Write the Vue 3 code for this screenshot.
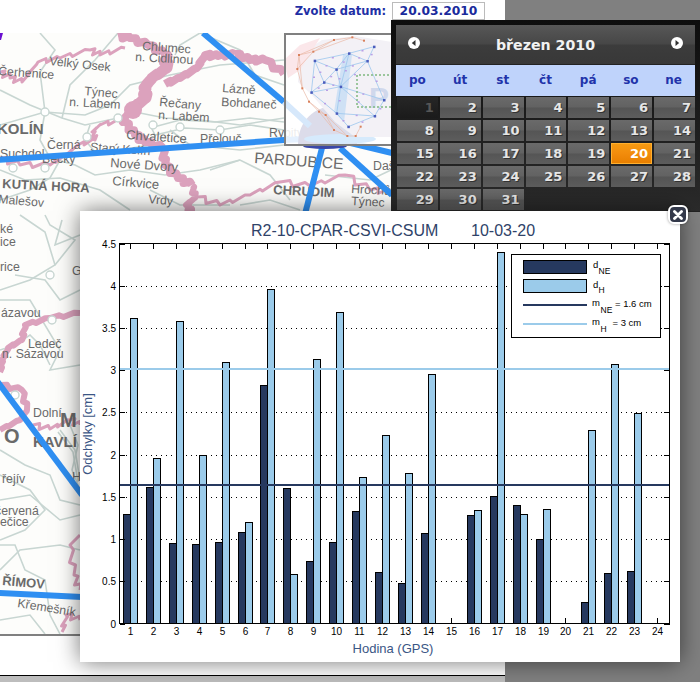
<template>
  <div class="page">
    <div class="date-row">
      <label class="date-label">Zvolte datum:</label>
      <span class="date-input">20.03.2010</span>
    </div>

    <svg class="map" viewBox="0 33 505 601" role="img" aria-label="Mapa">
      <rect x="0" y="33" width="505" height="601" fill="#fdfdfb" />
      <polygon points="0,33 3,33 1,40 0,40" fill="#6a10d0" />
      <polyline v-for="(r, i) in roads" :key="'r' + i" :points="r" class="road" />
      <polyline v-for="(b, i) in borders" :key="'b' + i" :points="jag(b.p, b.w)" class="border" :stroke-width="b.w" />
      <circle cx="133" cy="110" r="9" fill="#dca2bd" />
      <circle v-for="(c, i) in junctions" :key="'j' + i" :cx="c[0]" :cy="c[1]" r="4" class="junction" />
      <text
        v-for="(l, i) in labels"
        :key="'l' + i"
        :x="l.x"
        :y="l.y"
        :font-size="l.s || 12.3"
        :font-weight="l.b ? 700 : 400"
        :transform="`rotate(${l.r || 0} ${l.x} ${l.y})`"
        class="place"
      >{{ l.t }}</text>
      <polyline v-for="(b, i) in links" :key="'k' + i" :points="b" class="link" />

      <ellipse cx="325" cy="146" rx="22" ry="3" fill="#3a48a8" />
      <rect x="285" y="34" width="108" height="111" fill="#fff" opacity="0.88" />
      <path d="M298 145 C298 118 318 105 335 107 C350 110 357 128 357 145 Z" fill="#dcdcea" />
      <ellipse cx="340" cy="139" rx="36" ry="5" fill="#d6eafc" />
      <polyline points="284,102 310,126" stroke="#d6e8fb" stroke-width="6" fill="none" />
      <polygon points="300,55 322,40 355,36 392,42 392,137 355,137 335,122 312,95 298,82" fill="#f3f1f6" />
      <polygon points="343,55 352,55 344,122 334,112" fill="#cfe1f5" />
      <polygon points="284,60 300,45 320,38 300,70 288,78" fill="#fbe7ea" />
      <text x="369" y="108" class="inset-letter">P</text>
      <line v-for="(e, i) in redEdges" :key="'re' + i" :x1="e[0]" :y1="e[1]" :x2="e[2]" :y2="e[3]" class="red-edge" />
      <line v-for="(e, i) in blueEdges" :key="'be' + i" :x1="e[0]" :y1="e[1]" :x2="e[2]" :y2="e[3]" class="blue-edge" />
      <rect v-for="(n, i) in specks" :key="'s' + i" :x="n[0]" :y="n[1]" width="2" height="1.5" fill="#b9a0e6" />
      <path d="M393 75 H357 V107 H393" class="green-box" />
      <rect v-for="(n, i) in redNodes" :key="'rn' + i" :x="n[0] - 1" :y="n[1] - 1" width="2" height="2" fill="#d9805c" />
      <rect v-for="(n, i) in blueNodes" :key="'bn' + i" :x="n[0] - 1" :y="n[1] - 1" width="2.5" height="2.5" fill="#4a5cbc" />
      <rect x="285" y="34" width="108" height="111" class="inset-frame" />
    </svg>

    <div class="footer"></div>

    <div class="dim"></div>

    <div class="calendar">
      <div class="cal-head">
        <svg class="nav" viewBox="0 0 12 12"><circle cx="6" cy="6" r="6" fill="#fff" /><path d="M7.5 3 L3.8 6 L7.5 9 Z" fill="#333" /></svg>
        <span class="cal-title">březen 2010</span>
        <svg class="nav" viewBox="0 0 12 12"><circle cx="6" cy="6" r="6" fill="#fff" /><path d="M4.5 3 L8.2 6 L4.5 9 Z" fill="#333" /></svg>
      </div>
      <div class="cal-week">
        <span v-for="d in weekdays" :key="d">{{ d }}</span>
      </div>
      <div class="cal-days">
        <span
          v-for="n in 31"
          :key="n"
          class="day"
          :class="{ off: n === 1, active: n === 20 }"
        >{{ n }}</span>
      </div>
    </div>

    <div class="modal">
      <svg class="chart" viewBox="80 211 600 451" role="img" aria-label="Odchylky">
        <text x="251" y="236" class="chart-title">R2-10-CPAR-CSVI-CSUM</text>
        <text x="471" y="236" class="chart-title">10-03-20</text>

        <line
          v-for="v in gridValues"
          :key="'g' + v"
          :x1="axis.left + 1"
          :x2="axis.right - 1"
          :y1="y(v)"
          :y2="y(v)"
          class="grid"
        />

        <template v-for="(h, i) in hours" :key="'h' + i">
          <line :x1="px(i)" :x2="px(i)" :y1="axis.top" :y2="axis.top + 5" class="tick" />
          <line :x1="px(i)" :x2="px(i)" :y1="axis.bottom" :y2="axis.bottom - 6" class="tick" />
          <rect
            v-if="dNE[i]"
            :x="px(i) - 7"
            :y="y(dNE[i])"
            width="7"
            :height="axis.bottom - y(dNE[i])"
            class="bar-ne"
          />
          <rect
            v-if="dH[i]"
            :x="px(i)"
            :y="y(dH[i])"
            width="7"
            :height="axis.bottom - y(dH[i])"
            class="bar-h"
          />
          <text :x="px(i)" y="635" class="tick-label" text-anchor="middle">{{ h }}</text>
        </template>

        <template v-for="v in tickValues" :key="'t' + v">
          <line :x1="axis.left" :x2="axis.left + 5" :y1="y(v)" :y2="y(v)" class="tick" />
          <line :x1="axis.right" :x2="axis.right - 6" :y1="y(v)" :y2="y(v)" class="tick" />
          <text x="116" :y="y(v) + 3.5" class="tick-label" text-anchor="end">{{ v }}</text>
        </template>

        <line :x1="axis.left" :x2="axis.right" y1="485" y2="485" class="mean-ne" />
        <line :x1="axis.left" :x2="axis.right" y1="369" y2="369" class="mean-h" />
        <rect :x="axis.left" :y="axis.top" :width="axis.right - axis.left" :height="axis.bottom - axis.top" class="frame" />

        <rect x="511.5" y="254.5" width="149" height="83" class="legend" />
        <rect x="523.5" y="260.5" width="63" height="13" class="bar-ne" />
        <rect x="523.5" y="279.5" width="63" height="13" class="bar-h" />
        <line x1="523" x2="587" y1="305" y2="305" class="legend-ne" />
        <line x1="523" x2="587" y1="324" y2="324" class="legend-h" />
        <text x="593" y="268" class="legend-text">d</text>
        <text x="598.5" y="274" class="legend-sub">NE</text>
        <text x="593" y="288" class="legend-text">d</text>
        <text x="598.5" y="293" class="legend-sub">H</text>
        <text x="592" y="306" class="legend-text">m</text>
        <text x="600.5" y="313" class="legend-sub">NE</text>
        <text x="615" y="307" class="legend-text">= 1.6 cm</text>
        <text x="592" y="325" class="legend-text">m</text>
        <text x="600.5" y="332" class="legend-sub">H</text>
        <text x="612.5" y="326" class="legend-text">= 3 cm</text>

        <text transform="translate(92 434) rotate(-90)" class="axis-title" text-anchor="middle">Odchylky [cm]</text>
        <text x="393" y="653" class="axis-title" text-anchor="middle">Hodina (GPS)</text>
      </svg>
      <button class="close" aria-label="Zavřít">
        <svg viewBox="0 0 10 10" width="10" height="10"><path d="M1.5 1.5 L8.5 8.5 M8.5 1.5 L1.5 8.5" stroke="#fff" stroke-width="2.8" stroke-linecap="round" /></svg>
      </button>
    </div>
  </div>
</template>

<script setup>
const weekdays = ['po', 'út', 'st', 'čt', 'pá', 'so', 'ne']

const axis = { left: 119.5, right: 669.5, top: 243.5, bottom: 623.5 }
const hours = Array.from({ length: 24 }, (_, i) => i + 1)
const dNE = [1.3, 1.62, 0.95, 0.94, 0.96, 1.08, 2.82, 1.6, 0.74, 0.96, 1.33, 0.61, 0.48, 1.07, 0, 1.28, 1.51, 1.4, 1.0, 0, 0.26, 0.6, 0.62, 0]
const dH = [3.62, 1.96, 3.58, 2.0, 3.1, 1.2, 3.96, 0.59, 3.13, 3.69, 1.74, 2.23, 1.78, 2.96, 0, 1.35, 4.4, 1.3, 1.36, 0, 2.29, 3.07, 2.49, 0]
const tickValues = [4.5, 4, 3.5, 3, 2.5, 2, 1.5, 1, 0.5, 0]
const gridValues = [4, 3.5, 2.5, 2, 1.5, 1, 0.5]

const px = (i) => Math.round(axis.left + (i + 0.5) * 22.92) - 0.5
const y = (v) => Math.round(axis.bottom - v * 84.44) + 0.5

// district borders on the map are jagged, so each leg gets a few offset points
const jag = (points, w) => {
  const pts = points.split(' ').map((s) => s.split(',').map(Number))
  const out = []
  pts.forEach((p, i) => {
    out.push(p.join(','))
    const q = pts[i + 1]
    if (!q) return
    for (let k = 1; k < 4; k++) {
      const off = (k % 2 ? 1 : -1) * (w > 4 ? 1.5 : 2.5)
      out.push(`${p[0] + ((q[0] - p[0]) * k) / 4 + off},${p[1] + ((q[1] - p[1]) * k) / 4 - off}`)
    }
  })
  return out.join(' ')
}

const roads = [
  '0,90 30,105 62,118 85,125 118,118 140,113 165,118 200,120 240,125 284,118',
  '0,125 45,112 85,115 110,105 130,85 170,75 220,65 284,60',
  '45,112 40,140 50,158 75,165 95,175 130,170 165,175 200,170 240,160',
  '0,170 25,180 60,178 100,190 115,200 130,210',
  '150,125 155,135 185,128 220,130 250,125 284,130',
  '150,128 180,120 215,122 250,118 284,122',
  '90,125 85,140 95,152 120,150 150,145',
  '118,33 95,60 70,85 62,118',
  '40,33 55,50 40,72 45,112',
  '200,33 240,50 255,75 284,85',
  '170,130 190,145 240,150 284,145',
  '0,200 30,190 50,178 60,160',
  '20,215 45,232 55,265 30,280 0,290',
  '55,265 75,240 50,225 45,215',
  '15,275 45,280 60,300 80,290',
  '62,220 55,245 80,235',
  '0,300 30,300 60,350 50,370 80,365',
  '50,365 40,345 30,335 15,345 0,350',
  '0,450 25,465 50,475 60,500 80,505',
  '0,475 30,490 45,510 25,530 0,540',
  '0,545 15,545 25,570 45,580 50,615 60,634',
  '0,570 20,550 60,545 80,550',
  '60,430 75,450 80,480',
  '58,432 73,452 78,482',
  '70,425 78,445 72,470 80,490',
  '0,500 30,495 60,520 80,515',
  '0,620 30,615 45,634',
  '240,205 270,200 300,210',
  '150,190 180,205 230,205',
  '210,170 240,160 270,175 290,200',
  '325,175 370,180 391,170',
  '200,33 180,45 175,55',
]
const borders = [
  { p: '118,36 130,38 148,45 165,54', w: 8 },
  { p: '165,54 167,68 152,78 144,88 146,98 133,108', w: 11 },
  { p: '133,108 124,118 124,124', w: 7 },
  { p: '235,54 218,56 205,55 197,68 180,78 165,84', w: 8 },
  { p: '235,54 250,60 265,60 284,74', w: 8 },
  { p: '0,72 10,78 22,82 38,62 60,58 90,50 100,55 125,48', w: 3 },
  { p: '125,122 135,135 145,142 163,148', w: 8 },
  { p: '163,148 165,165 178,178 192,185', w: 8 },
  { p: '192,185 195,198 186,205 192,212', w: 6 },
  { p: '122,120 100,125 92,132 95,140 78,145 66,155 50,165 20,165 0,158', w: 3 },
  { p: '197,197 220,205 250,195 280,182 310,186 345,175 370,190 391,192', w: 3 },
  { p: '80,313 50,318 25,325 22,340 8,348 2,360 0,372', w: 6 },
  { p: '0,385 22,390 27,410 20,420 0,430', w: 6 },
  { p: '33,425 50,429 70,420 80,425', w: 3 },
  { p: '80,535 70,545 74,575 80,590', w: 3 },
  { p: '80,620 66,615 62,632', w: 3 },
]
const junctions = [[45, 112], [118, 118], [153, 125], [180, 127], [220, 130], [45, 168], [87, 137], [13, 168], [50, 275], [52, 320], [15, 395]]
const links = [
  '-2,160 284,140 330,138 392,153',
  '203,33 284,102',
  '322,148 305,214',
  '340,148 392,195',
  '-3,381 82,495',
  '-2,593 82,597',
]
const labels = [
  { t: 'Chlumec', x: 142, y: 50, r: 4 },
  { t: 'n. Cidlinou', x: 135, y: 61, r: 3 },
  { t: 'Čerhenice', x: -2, y: 75, r: 4 },
  { t: 'Velký Osek', x: 49, y: 65, r: 6 },
  { t: 'Týnec', x: 84, y: 95, r: 5 },
  { t: 'n. Labem', x: 69, y: 106, r: 3 },
  { t: 'Lázně', x: 222, y: 92, r: 4 },
  { t: 'Bohdaneč', x: 221, y: 106, r: 3 },
  { t: 'Řečany', x: 159, y: 106, r: 5 },
  { t: 'n. Labem', x: 158, y: 119, r: 3 },
  { t: 'KOLÍN', x: -3, y: 134, s: 15, b: 1 },
  { t: 'Chvaletice', x: 126, y: 139, r: 4, s: 13 },
  { t: 'Přelouč', x: 200, y: 143 },
  { t: 'Rybitví', x: 269, y: 137 },
  { t: 'Černá', x: 47, y: 149 },
  { t: 'Starý Kolín', x: 90, y: 151, r: 4 },
  { t: 'Suchdol', x: 0, y: 158 },
  { t: 'Bečky', x: 42, y: 163 },
  { t: 'Nové Dvory', x: 110, y: 167, r: 4, s: 13 },
  { t: 'KUTNÁ HORA', x: 2, y: 188, s: 13, b: 1, r: 3 },
  { t: 'Církvice', x: 112, y: 185, r: 5, s: 13 },
  { t: 'Vrdy', x: 148, y: 203, r: 5 },
  { t: 'Malešov', x: -2, y: 203, r: 5 },
  { t: 'PARDUBICE', x: 254, y: 163, s: 15.5, r: 4 },
  { t: 'CHRUDIM', x: 273, y: 194, s: 13, b: 1, r: 3 },
  { t: 'Hrochův', x: 351, y: 193, r: 3 },
  { t: 'Týnec', x: 351, y: 205, r: 3 },
  { t: 'Dašice', x: 373, y: 170 },
  { t: 'ké', x: 0, y: 233 },
  { t: 'ice', x: 0, y: 246 },
  { t: 'rice', x: 0, y: 271 },
  { t: 'G', x: 72, y: 275 },
  { t: 'ázavou', x: 1, y: 317 },
  { t: 'Ledeč', x: 28, y: 348 },
  { t: 'n. Sázavou', x: 2, y: 358 },
  { t: 'Dolní', x: 33, y: 417 },
  { t: 'M', x: 60, y: 427, s: 20, b: 1 },
  { t: 'O', x: 4, y: 443, s: 20, b: 1 },
  { t: 'KAVLÍ', x: 33, y: 447, s: 15, b: 1 },
  { t: 'H', x: 72, y: 481 },
  { t: 'řejív', x: 2, y: 483 },
  { t: 'červená', x: -5, y: 515 },
  { t: 'ečice', x: 0, y: 526 },
  { t: 'ŘÍMOV', x: 2, y: 585, s: 13, b: 1, r: 5 },
  { t: 'Křemešník', x: 17, y: 607, r: 9 },
]

// inset thumbnail: page coordinates derived from the zoomed crop
const ix = (v) => 284 + v / 3
const iy = (v) => 30 + v / 3
const rawBlue = [[92, 92], [195, 70], [270, 50], [250, 93], [157, 118], [120, 157], [170, 170], [82, 187], [158, 250], [193, 290], [272, 258], [300, 210]]
const rawRed = [[45, 75], [88, 65], [150, 30], [205, 22], [240, 32], [40, 117], [55, 175], [75, 215], [105, 245], [125, 255], [150, 300], [190, 318], [215, 318], [230, 290]]
const blueNodes = rawBlue.map(([a, b]) => [ix(a), iy(b)])
const redNodes = rawRed.map(([a, b]) => [ix(a), iy(b)])
const edge = (list, pairs) => pairs.map(([a, b]) => [list[a][0], list[a][1], list[b][0], list[b][1]])
const blueEdges = edge(blueNodes, [[0, 1], [1, 2], [1, 3], [0, 4], [4, 1], [4, 3], [4, 5], [5, 0], [4, 6], [5, 6], [6, 1], [5, 7], [7, 0], [7, 6], [6, 8], [7, 8], [8, 9], [8, 10], [6, 10], [6, 11], [10, 11], [3, 11], [9, 10], [2, 3], [6, 3]])
const redEdges = edge(redNodes, [[0, 1], [1, 2], [2, 3], [3, 4], [0, 5], [5, 6], [6, 7], [7, 8], [8, 9], [9, 10], [10, 11], [11, 12], [12, 13], [0, 2], [5, 1], [6, 0], [8, 10], [9, 11], [7, 9], [1, 3]])
const specks = blueEdges.map((e) => [(e[0] + e[2]) / 2, (e[1] + e[3]) / 2])
</script>

<style>
html, body { margin: 0; padding: 0; background: #fff; }
</style>

<style scoped>
.page {
  position: relative;
  width: 700px;
  height: 682px;
  overflow: hidden;
  background: #fff;
  font-family: "DejaVu Sans", Verdana, sans-serif;
}

.date-row {
  display: flex;
  align-items: center;
  justify-content: flex-end;
  gap: 6px;
  width: 485px;
  height: 21px;
  margin-bottom: 12px;
}
.date-label { font-size: 11.5px; font-weight: 700; color: #1f2fa5; }
.date-input {
  box-sizing: border-box;
  width: 93px;
  height: 18px;
  border: 1px solid #bbb;
  font-size: 12.3px;
  font-weight: 700;
  line-height: 16px;
  text-align: center;
  color: #1a2a9c;
}

.map {
  display: block;
  width: 505px;
  height: 601px;
  border-bottom: 2px solid #808080;
}
.road { fill: none; stroke: #c8d6d2; stroke-width: 1.6; }
.junction { fill: #fff; stroke: #c8d6d2; stroke-width: 1.4; }
.border { fill: none; stroke: #dca2bd; stroke-linejoin: round; }
.link { fill: none; stroke: #2f8ff2; stroke-width: 6; }
.place { font-family: "Liberation Sans", Arial, sans-serif; fill: #6a6a6a; }
.inset-letter { font-family: "Liberation Sans", Arial, sans-serif; font-size: 30px; font-weight: 700; fill: #d0d8ec; }
.red-edge { stroke: #eab9a6; stroke-width: 0.7; }
.blue-edge { stroke: #9cc6ee; stroke-width: 0.8; }
.green-box { fill: none; stroke: #80b880; stroke-width: 1.5; stroke-dasharray: 2 2; }
.inset-frame { fill: none; stroke: #808080; stroke-width: 2; }

.footer {
  height: 7px;
  margin-top: 39px;
  border-top: 1px solid #000;
  background: #bdbdbd;
}

.dim {
  position: absolute;
  top: 0;
  left: 505px;
  right: 0;
  bottom: 0;
  background: #808080;
}

.calendar {
  position: absolute;
  top: 20px;
  left: 391px;
  box-sizing: border-box;
  width: 309px;
  height: 192px;
  padding: 5px 5px 0;
  background: linear-gradient(#0d0d0d, #2b2b2b);
  border-bottom: 1px solid #222;
}
.cal-head {
  display: flex;
  align-items: center;
  justify-content: space-between;
  box-sizing: border-box;
  height: 40px;
  padding: 0 12px;
  background: linear-gradient(#575757 0%, #474747 48%, #3c3c3c 52%, #383838 100%);
  border-bottom: 1px solid #222;
}
.nav { width: 12px; height: 12px; margin-top: -4px; }
.cal-title { font-size: 14.2px; font-weight: 700; color: #f2f2f2; }
.cal-week {
  display: grid;
  grid-template-columns: repeat(7, 1fr);
  height: 31px;
  align-items: center;
  padding-bottom: 1px;
  box-sizing: border-box;
  background: #bfd3fb;
  font-size: 12px;
  font-weight: 700;
  text-align: center;
  color: #2233aa;
}
.cal-days {
  display: grid;
  grid-template-columns: repeat(7, 1fr);
  grid-auto-rows: 21px;
  gap: 2px;
  padding: 1px 0 0 1px;
}
.day {
  box-sizing: border-box;
  padding-right: 4px;
  font-size: 13px;
  font-weight: 700;
  line-height: 21px;
  text-align: right;
  color: #e6e6e6;
  text-shadow: 1px 1px 0 #333;
  background: linear-gradient(#6a6a6a 0%, #626262 48%, #555 52%, #5d5d5d 100%);
}
.day.off {
  color: #565656;
  text-shadow: none;
  background: linear-gradient(#262626, #1b1b1b);
}
.day.active {
  color: #fff;
  text-shadow: none;
  line-height: 19px;
  border: 1px solid #ffb030;
  padding-right: 3px;
  background: linear-gradient(#f59a12 0%, #f28c0c 50%, #e87f00 100%);
}

.modal {
  position: absolute;
  top: 211px;
  left: 80px;
  width: 600px;
  height: 451px;
  background: #fff;
  box-shadow: 0 0 22px rgba(0, 0, 0, 0.55);
}
.chart { display: block; width: 600px; height: 451px; }
.chart-title { font-family: "Liberation Sans", Arial, sans-serif; font-size: 16px; fill: #2f4369; }
.axis-title { font-family: "Liberation Sans", Arial, sans-serif; font-size: 13px; fill: #3b5685; }
.tick-label { font-family: "Liberation Sans", Arial, sans-serif; font-size: 10px; fill: #000; }
.grid { stroke: #000; stroke-width: 1; stroke-dasharray: 1 4; shape-rendering: crispEdges; }
.tick { stroke: #000; stroke-width: 1; shape-rendering: crispEdges; }
.frame { fill: none; stroke: #000; stroke-width: 1; shape-rendering: crispEdges; }
.bar-ne { fill: #26395f; stroke: #000; stroke-width: 1; shape-rendering: crispEdges; }
.bar-h { fill: #9bcbea; stroke: #000; stroke-width: 1; shape-rendering: crispEdges; }
.mean-ne { stroke: #26395f; stroke-width: 2; }
.mean-h { stroke: #9bcbea; stroke-width: 2; }
.legend { fill: #fff; stroke: #000; stroke-width: 1; shape-rendering: crispEdges; }
.legend-ne { stroke: #26395f; stroke-width: 2; }
.legend-h { stroke: #9bcbea; stroke-width: 2; }
.legend-text { font-family: "Liberation Sans", Arial, sans-serif; font-size: 9.5px; fill: #000; }
.legend-sub { font-family: "Liberation Sans", Arial, sans-serif; font-size: 8.5px; fill: #000; }

.close {
  position: absolute;
  top: -6px;
  right: -8px;
  display: flex;
  align-items: center;
  justify-content: center;
  box-sizing: border-box;
  width: 20px;
  height: 19px;
  padding: 0;
  border: 2px solid #fff;
  border-radius: 6px;
  background: #33394a;
  box-shadow: 0 0 3px rgba(0, 0, 0, 0.4);
}
</style>
